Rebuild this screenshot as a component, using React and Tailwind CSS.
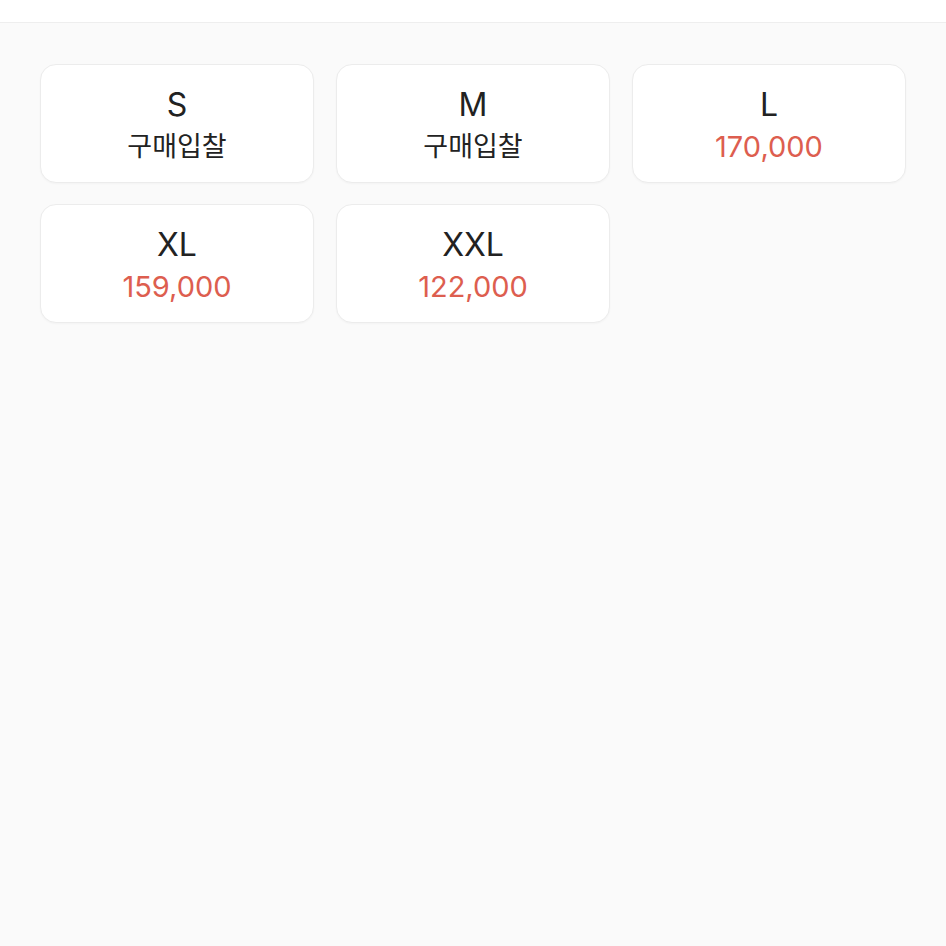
const sizes = [
  { size: "S", price: null },
  { size: "M", price: null },
  { size: "L", price: "170,000" },
  { size: "XL", price: "159,000" },
  { size: "XXL", price: "122,000" },
];

const SizeCard = ({ size, price }) => (
  <button className="h-[119px] pt-[3px] rounded-[16px] border border-[#ececec] bg-white flex flex-col items-center justify-center shadow-[0_1px_2px_rgba(0,0,0,0.03)]">
    <span className="text-[32px] leading-[38px] text-[#222222]">{size}</span>
    {price ? (
      <span className="text-[29px] leading-[34px] text-[#dd5e4f] mt-[6px]">{price}</span>
    ) : (
      <span className="text-[27px] leading-[34px] text-[#222222] mt-[6px]">구매입찰</span>
    )}
  </button>
);

const App = () => {
  return (
    <div
      className="min-h-[946px] bg-[#fafafa]"
      style={{ fontFamily: '"Inter", "Noto Sans CJK KR", sans-serif' }}
    >
      <div className="h-[23px] bg-white border-b border-[#eeeeee]" />
      <div className="grid grid-cols-3 gap-x-[22px] gap-y-[21px] px-[40px] pt-[41px]">
        {sizes.map((s) => (
          <SizeCard key={s.size} {...s} />
        ))}
      </div>
    </div>
  );
};

export default App;
